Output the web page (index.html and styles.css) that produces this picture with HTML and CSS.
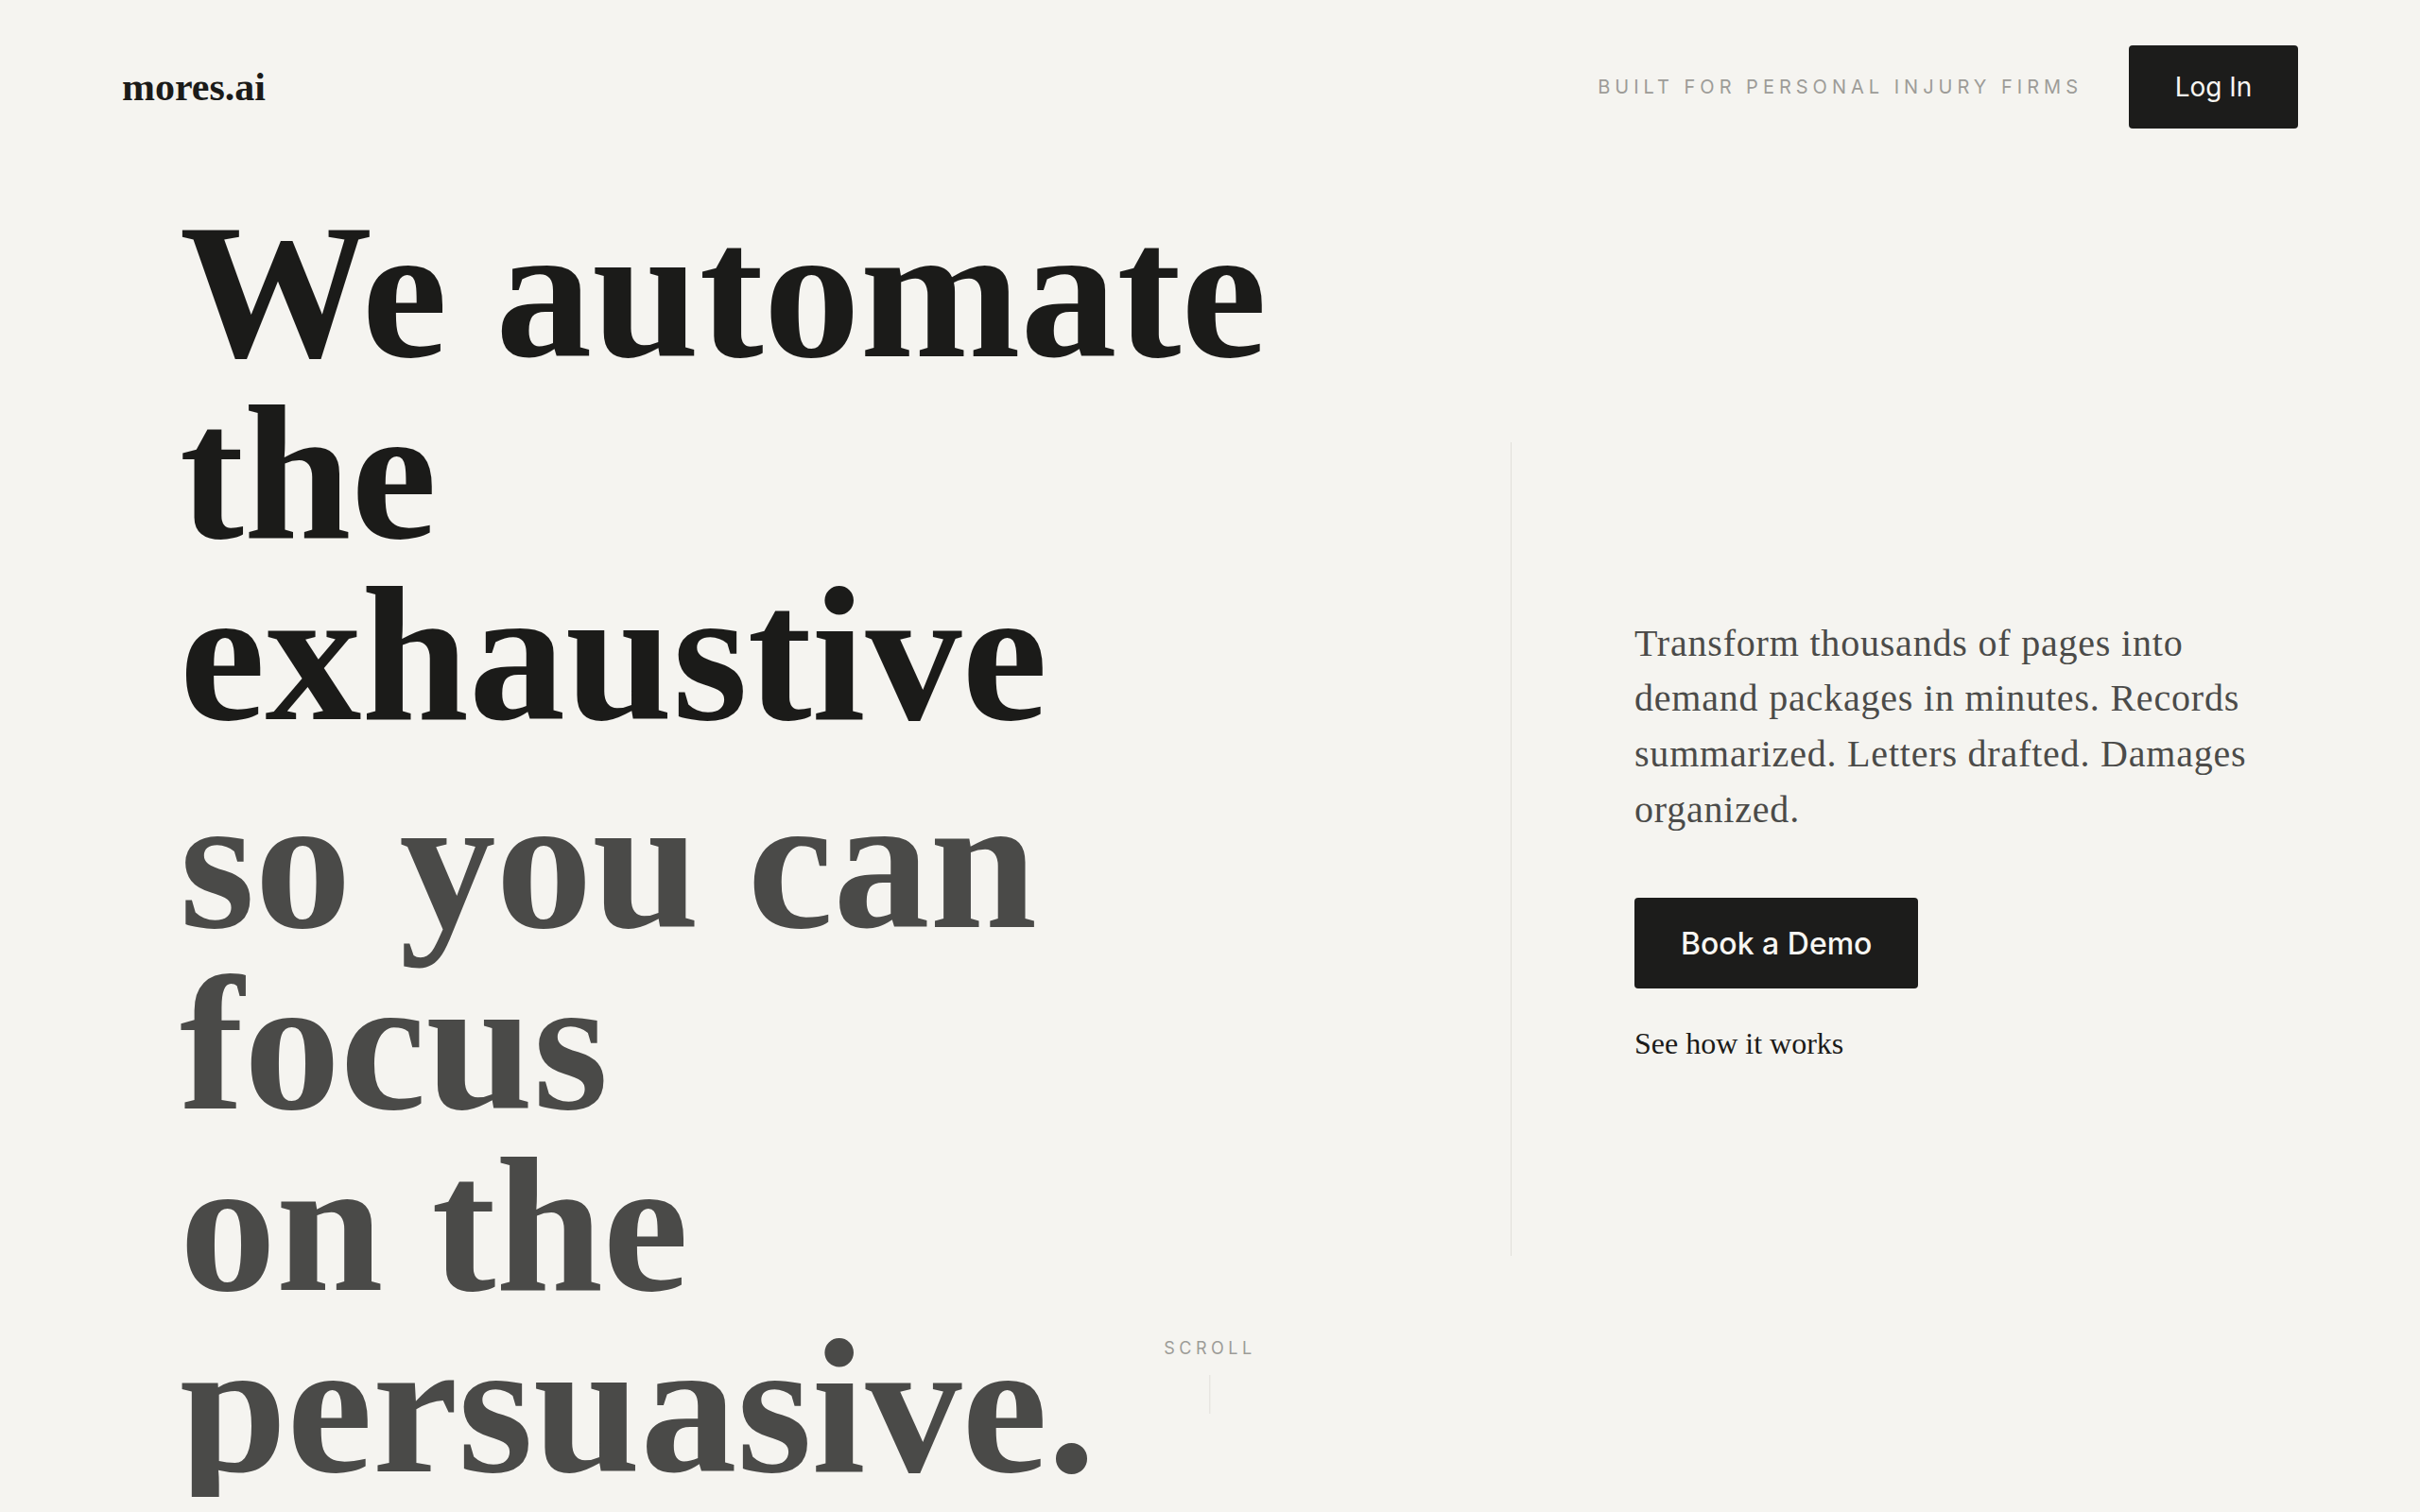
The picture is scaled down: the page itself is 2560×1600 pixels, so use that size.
FILE: index.html
```html
<!DOCTYPE html>
<html lang="en">
<head>
    <meta charset="UTF-8">
    <meta name="viewport" content="width=device-width, initial-scale=1.0">
    <title>mores.ai</title>
    <link rel="stylesheet" href="styles.css">
</head>
<body>
    <header class="nav">
        <a href="#" class="logo">mores.ai</a>
        <div class="nav-right">
            <span class="tagline">Built for personal injury firms</span>
            <a href="#" class="btn btn-login">Log In</a>
        </div>
    </header>

    <main class="hero">
        <h1 class="headline">
            <span class="line">We automate</span>
            <span class="line">the</span>
            <span class="line">exhaustive</span>
            <span class="soft">
                <span class="line">so you can</span>
                <span class="line">focus</span>
                <span class="line">on the</span>
                <span class="line">persuasive.</span>
            </span>
        </h1>

        <div class="intro">
            <p class="lede">Transform thousands of pages into demand packages in minutes. Records summarized. Letters drafted. Damages organized.</p>
            <a href="#" class="btn btn-demo">Book a Demo</a>
            <a href="#" class="how-link">See how it works</a>
        </div>
    </main>

    <div class="scroll-hint">
        <span class="scroll-label">Scroll</span>
        <span class="scroll-line"></span>
    </div>
</body>
</html>
```

FILE: styles.css
```css
body {
    margin: 0;
    background-color: #f5f4f0;
    color: #1b1b19;
    font-family: "Liberation Serif", "Times New Roman", serif;
}
a {
    color: inherit;
    text-decoration: none;
}

/* top bar */
.nav {
    display: flex;
    justify-content: space-between;
    align-items: center;
    padding: 48px 129px 0;
}
.logo {
    font-size: 42px;
    font-weight: 700;
    color: #1b1b19;
}
.nav-right {
    display: flex;
    align-items: center;
    gap: 49px;
}
.tagline {
    font-family: Inter, "Liberation Sans", sans-serif;
    font-size: 20px;
    letter-spacing: 5px;
    text-transform: uppercase;
    color: #9d9c98;
}
.btn {
    display: inline-flex;
    align-items: center;
    justify-content: center;
    font-family: Inter, "Liberation Sans", sans-serif;
    background-color: #1c1c1b;
    color: #f7f6f2;
    border-radius: 4px;
}
.btn-login {
    width: 179px;
    height: 88px;
    font-size: 28px;
}

/* hero */
.hero {
    display: grid;
    grid-template-columns: 1fr 833px;
    align-items: center;
    padding: 76px 129px 0 190px;
}
.headline {
    margin: 0;
    font-size: 204px;
    line-height: 192px;
    font-weight: 700;
    color: #1b1b19;
}
.headline .line {
    display: block;
}
.headline .soft {
    display: block;
    margin-top: 28px;
    color: #4a4a48;
}

.intro {
    box-sizing: border-box;
    height: 861px;
    border-left: 1px solid #e1dfda;
    padding: 0 0 16px 130px;
    display: flex;
    flex-direction: column;
    justify-content: center;
    align-items: flex-start;
}
.lede {
    max-width: 680px;
    margin: 0 0 64px;
    font-size: 40px;
    line-height: 58.7px;
    letter-spacing: 0.8px;
    color: #4b4b49;
}
.btn-demo {
    height: 96px;
    padding: 0 49px;
    font-size: 32px;
    font-weight: 500;
}
.how-link {
    margin-top: 34px;
    font-size: 32px;
    line-height: 48px;
    color: #1b1b19;
}

/* scroll indicator */
.scroll-hint {
    position: absolute;
    top: calc(100vh - 184px);
    left: 50%;
    transform: translateX(-50%);
    display: flex;
    flex-direction: column;
    align-items: center;
    gap: 17px;
}
.scroll-label {
    font-family: Inter, "Liberation Sans", sans-serif;
    font-size: 18px;
    line-height: 22px;
    letter-spacing: 0.25em;
    text-transform: uppercase;
    color: #9d9c98;
}
.scroll-line {
    width: 1px;
    height: 41px;
    background-color: #e1dfda;
}
```
